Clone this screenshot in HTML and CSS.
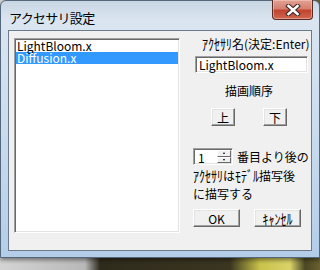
FILE: index.html
```html
<!DOCTYPE html>
<html lang="ja">
<head>
    <meta charset="UTF-8">
    <title>アクセサリ設定</title>
    <link rel="stylesheet" href="styles.css">
</head>
<body>
    <div class="desktop">
        <div class="window">
            <div class="titlebar">
                <span class="title">アクセサリ設定</span>
                <div class="close">
                    <svg width="16" height="12" viewBox="0 0 16 12">
                        <path d="M3.5 2 L12.5 10 M12.5 2 L3.5 10" stroke="#3a2626" stroke-width="4.6" stroke-linecap="square"/>
                        <path d="M3.5 2 L12.5 10 M12.5 2 L3.5 10" stroke="#ffffff" stroke-width="2.6" stroke-linecap="square"/>
                    </svg>
                </div>
            </div>

            <div class="client">
                <div class="listbox">
                    <div class="item">LightBloom.x</div>
                    <div class="item selected">Diffusion.x</div>
                </div>

                <div class="panel">
                    <div class="name-label"><span class="hw">ｱｸｾｻﾘ</span>名(決定:Enter)</div>
                    <div class="edit name-edit">LightBloom.x</div>

                    <div class="order-label">描画順序</div>
                    <div class="order-buttons">
                        <div class="btn small">上</div>
                        <div class="btn small">下</div>
                    </div>

                    <div class="spin-row">
                        <div class="edit spin-edit">
                            <span class="spin-value">1</span>
                            <div class="spin">
                                <div class="spin-btn"><i class="arrow up"></i></div>
                                <div class="spin-btn"><i class="arrow down"></i></div>
                            </div>
                        </div>
                        <span>番目より後の</span>
                    </div>
                    <div class="note"><span class="hw">ｱｸｾｻﾘ</span>は<span class="hw">ﾓﾃﾞﾙ</span>描写後<br>に描写する</div>

                    <div class="actions">
                        <div class="btn wide">OK</div>
                        <div class="btn wide"><span class="hw">ｷｬﾝｾﾙ</span></div>
                    </div>
                </div>
            </div>
        </div>
    </div>
</body>
</html>
```

FILE: styles.css
```css
body {
    margin: 0;
    font-family: "Noto Sans CJK JP", "Noto Sans", sans-serif;
    font-size: 12px;
    color: #000;
}

.desktop {
    width: 320px;
    height: 270px;
    overflow: hidden;
    background: linear-gradient(90deg, #d4d4d4 0, #b8b8b8 85px, #2f2b1c 100px, #3b3620 230px, #c9c24a 260px, #d9d36a 290px, #4b4724 305px, #6a6030 320px);
}

.window {
    box-sizing: border-box;
    width: 320px;
    height: 258px;
    padding: 0 7px 6px 7px;
    border: 1px solid #55677c;
    border-radius: 6px 6px 0 0;
    background: linear-gradient(180deg, #c9d6e3 0, #dae5f1 20px, #c6d9ed 60%, #b3cde9 100%);
    box-shadow: 0 2px 4px rgba(0, 0, 0, 0.45);
}

.titlebar {
    display: flex;
    align-items: flex-start;
    height: 29px;
}

.title {
    padding: 8px 0 0 1px;
    line-height: 17px;
    font-size: 13px;
    letter-spacing: -0.7px;
    color: #000;
}

.close {
    display: flex;
    align-items: center;
    justify-content: center;
    box-sizing: border-box;
    width: 41px;
    height: 20px;
    margin: -1px -1px 0 auto;
    border: 1px solid #5a2a24;
    border-top: none;
    border-radius: 0 0 4px 4px;
    background: linear-gradient(180deg, #e3a193 0, #d48070 45%, #c24430 55%, #cd684e 100%);
    box-shadow: inset 0 0 0 1px rgba(255, 220, 210, 0.45);
}

.client {
    display: flex;
    box-sizing: border-box;
    height: 221px;
    border: 1px solid #6b7b8c;
    background: #f0f0f0;
}

.listbox {
    box-sizing: border-box;
    width: 166px;
    height: 195px;
    margin: 7px 0 0 5px;
    border: 1px solid;
    border-color: #a0a0a0 #fff #fff #a0a0a0;
    box-shadow: inset 1px 1px 0 #696969, inset -1px -1px 0 #e3e3e3;
    background: #fff;
    padding: 1px;
}

.item {
    height: 12px;
    line-height: 12px;
    padding-left: 1px;
    white-space: nowrap;
}

.item.selected {
    background: #3399ff;
    color: #fff;
}

/* half-width kana look tiny in Noto, stretch them a little */
.hw {
    display: inline-block;
    transform: scaleY(1.22);
}

.panel {
    width: 116px;
    margin-left: 13px;
}

.name-label {
    margin-top: 6px;
    padding-left: 9px;
    line-height: 14px;
    white-space: nowrap;
}

.edit {
    box-sizing: border-box;
    border: 1px solid;
    border-color: #a0a0a0 #fff #fff #a0a0a0;
    box-shadow: inset 1px 1px 0 #696969, inset -1px -1px 0 #e3e3e3;
    background: #fff;
}

.name-edit {
    width: 113px;
    height: 17px;
    margin: 5px 0 0 2px;
    padding-left: 3px;
    line-height: 15px;
}

.order-label {
    margin-top: 11px;
    padding-left: 32px;
    line-height: 14px;
}

.order-buttons {
    display: flex;
    gap: 28px;
    margin: 10px 0 0 18px;
}

.btn {
    box-sizing: border-box;
    display: flex;
    align-items: center;
    justify-content: center;
    border: 1px solid;
    border-color: #fff #696969 #696969 #fff;
    box-shadow: inset -1px -1px 0 #a0a0a0, inset 1px 1px 0 #e3e3e3;
    background: #f0f0f0;
}

.btn.small {
    width: 24px;
    height: 18px;
}

.spin-row {
    display: flex;
    align-items: center;
    margin-top: 22px;
    white-space: nowrap;
}

.spin-edit {
    display: flex;
    justify-content: space-between;
    width: 40px;
    height: 17px;
    margin-right: 4px;
    padding: 1px;
}

.spin-value {
    padding-left: 3px;
    line-height: 15px;
}

.spin {
    display: flex;
    flex-direction: column;
    width: 14px;
}

.spin-btn {
    flex: 1;
    display: flex;
    align-items: center;
    justify-content: center;
    box-sizing: border-box;
    border: 1px solid;
    border-color: #fff #696969 #696969 #fff;
    background: #f0f0f0;
}

.arrow {
    width: 0;
    height: 0;
    border-left: 1px solid transparent;
    border-right: 1px solid transparent;
}

.arrow.up {
    border-bottom: 2px solid #000;
}

.arrow.down {
    border-top: 2px solid #000;
}

.note {
    margin-top: 2px;
    line-height: 18px;
    white-space: nowrap;
}

.actions {
    display: flex;
    gap: 14px;
    margin-top: 6px;
}

.btn.wide {
    width: 47px;
    height: 18px;
}
```
